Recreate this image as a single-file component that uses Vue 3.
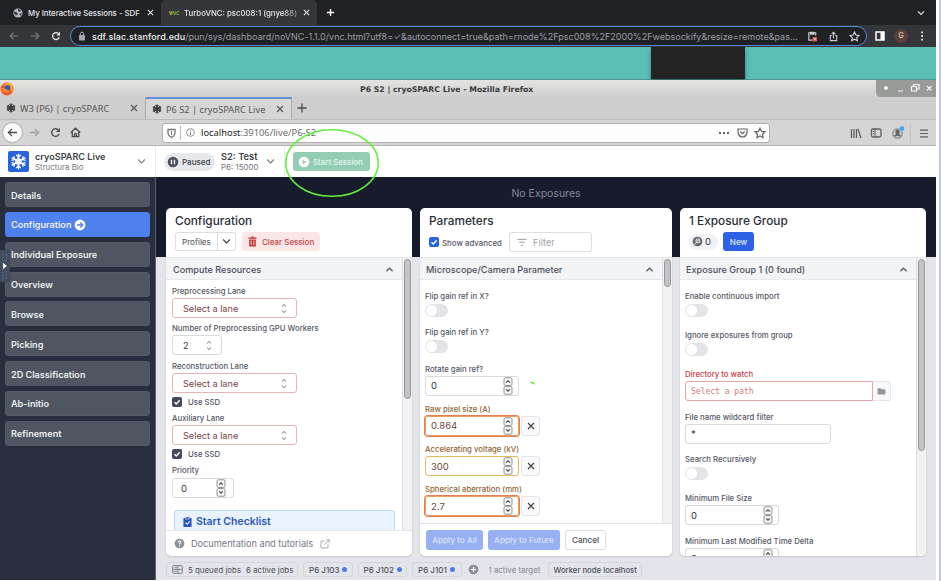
<script setup>
const nav = ['Details', 'Configuration', 'Individual Exposure', 'Overview', 'Browse', 'Picking', '2D Classification', 'Ab-initio', 'Refinement']
const jobs = ['P6 J103', 'P6 J102', 'P6 J101']
const micro = [
  { label: 'Rotate gain ref?', value: '0', kind: 'plain' },
  { label: 'Raw pixel size (A)', value: '0.864', kind: 'hot' },
  { label: 'Accelerating voltage (kV)', value: '300', kind: 'warn' },
  { label: 'Spherical aberration (mm)', value: '2.7', kind: 'hot' },
]
</script>

<template>
  <div class="screen">
    <svg class="defs" width="0" height="0">
      <symbol id="spin" viewBox="0 0 10 19">
        <rect x=".8" y=".8" width="8.4" height="8.2" rx="1.5" fill="#f7f7f7" stroke="#8c8c8c" />
        <rect x=".8" y="10" width="8.4" height="8.2" rx="1.5" fill="#f7f7f7" stroke="#8c8c8c" />
        <path d="M3 6l2-2 2 2M3 13l2 2 2-2" fill="none" stroke="#444" stroke-width="1.1" />
      </symbol>
      <symbol id="updown" viewBox="0 0 6 12">
        <path d="M.8 3.8L3 1.5l2.2 2.3M.8 8.2L3 10.5l2.2-2.3" fill="none" stroke="#8d8f96" stroke-width="1.1" />
      </symbol>
      <symbol id="down" viewBox="0 0 8 6"><path d="M1 1.3l3 3 3-3" fill="none" stroke="currentColor" stroke-width="1.2" /></symbol>
      <symbol id="up" viewBox="0 0 8 6"><path d="M1.2 4.6L4 1.8l2.8 2.8" fill="none" stroke="#5c6270" stroke-width="1.2" /></symbol>
      <symbol id="x" viewBox="0 0 8 8"><path d="M1 1l6 6M7 1L1 7" fill="none" stroke="currentColor" stroke-width="1.2" /></symbol>
      <symbol id="flake" viewBox="0 0 20 20">
        <g fill="none" stroke="currentColor">
          <path d="M10 .8v18.400M2 5.400l16 9.200M2 14.600l16-9.200" />
          <path d="M7.300 2.300l2.700 2.700 2.700-2.700M7.300 17.700l2.700-2.700 2.700 2.700M1.800 8.700l3.700-1-1-3.700M18.200 11.300l-3.700 1 1 3.700M1.800 11.300l3.700 1-1 3.700M18.200 8.700l-3.700-1 1-3.700M10 6.500l3 1.800v3.500l-3 1.800-3-1.800V8.300z" />
        </g>
      </symbol>
      <symbol id="check" viewBox="0 0 10 10"><path d="M2.5 5.2l1.8 1.8 3.4-3.8" fill="none" stroke="#fff" stroke-width="1.4" /></symbol>
      <symbol id="back" viewBox="0 0 12 10"><path d="M11 5H1.5M5.5 1l-4 4 4 4" fill="none" stroke="currentColor" stroke-width="1.4" /></symbol>
      <symbol id="reload" viewBox="0 0 12 12"><path d="M10 7.5A4.2 4.2 0 1 1 9.5 3.6" fill="none" stroke="currentColor" stroke-width="1.5" /><path d="M10.8 1v4.4H6.4z" fill="currentColor" /></symbol>
      <symbol id="star" viewBox="0 0 12 12"><path d="M6 1.2l1.5 3.2 3.4.4-2.5 2.4.7 3.5L6 9l-3.1 1.7.7-3.5L1.100 4.800l3.400-.4z" fill="none" stroke="currentColor" stroke-width="1.200" /></symbol>
    </svg>

    <header class="c-tabs">
      <div class="c-tab first">
        <svg class="globe" viewBox="0 0 10 10"><circle cx="5" cy="5" r="4.600" fill="#b5b8bc" /><path d="M1 3.500l3 1 1 2-2 1-2-2zM5 1l3 1-1 2-2-1zM6 6l3-1-1 3z" fill="#3b3d41" /></svg>
        <span class="t1">My Interactive Sessions - SDF</span><svg class="x"><use href="#x" /></svg>
      </div>
      <div class="c-tab active">
        <span class="vnc">V<i>NC</i></span><span class="t2">TurboVNC: psc008:1 (gnye88)</span><svg class="x"><use href="#x" /></svg>
      </div>
      <svg class="plus" viewBox="0 0 10 10"><path d="M5 1v8M1 5h8" stroke="#fff" stroke-width="1.500" /></svg>
      <svg class="more"><use href="#down" /></svg>
    </header>

    <div class="c-bar">
      <svg class="ic dim"><use href="#back" /></svg>
      <svg class="ic dim flip"><use href="#back" /></svg>
      <svg class="ic"><use href="#reload" /></svg>
      <div class="c-url">
        <svg class="lock" viewBox="0 0 8 10"><rect x="1" y="4" width="6" height="5.500" rx=".8" fill="#a4a7ab" /><path d="M2.300 4V2.800a1.700 1.700 0 0 1 3.400 0V4" fill="none" stroke="#a4a7ab" /></svg>
        <span class="addr"><b>sdf.slac.stanford.edu</b>/pun/sys/dashboard/noVNC-1.1.0/vnc.html?utf8=✓&amp;autoconnect=true&amp;path=rnode%2Fpsc008%2F2000%2Fwebsockify&amp;resize=remote&amp;pas...</span>
        <svg class="clip" viewBox="0 0 12 12"><path d="M9.500 5V2H2v8h4M4 1.500h3.500v2H4z" fill="none" stroke="#c9cbcf" stroke-width="1.300" /><rect x="6" y="6.500" width="5" height="5" rx="1" fill="#e2574c" /><path d="M7.500 8l2 2M9.500 8l-2 2" stroke="#fff" stroke-width=".7" /></svg>
        <svg class="share" viewBox="0 0 12 12"><path d="M4 5H2.500v5.500h7V5H8M6 8V1.500M4 3.500l2-2 2 2" fill="none" stroke="#c9cbcf" stroke-width="1.200" /></svg>
        <svg class="star"><use href="#star" /></svg>
      </div>
      <svg class="panel" viewBox="0 0 10 10"><path d="M1 1h8v8H1z" fill="none" stroke="#fff" stroke-width="1.500" /><path d="M5.500 1H9v8H5.500z" fill="#fff" /></svg>
      <span class="ava">G</span>
      <svg class="dots" viewBox="0 0 4 10"><path d="M1.200.5h1.800v1.800H1.200zM1.200 4.100h1.800v1.800H1.200zM1.200 7.700h1.800v1.800H1.200z" fill="#dfe1e5" /></svg>
    </div>

    <div class="desk"><div class="shade"></div></div>

    <div class="f-title">
      <svg class="fox" viewBox="0 0 14 14"><circle cx="7" cy="7" r="6.500" fill="#f5572c" /><path d="M2 2l2 1.200Q8-1 11 2q3 4 1 8-3-7-8-6z" fill="#ffae24" /><circle cx="7.500" cy="6" r="3" fill="#3a5bb0" /><path d="M1 6q5 0 6 2 3 1 3-1 0 4-4 4-4-1-5-5z" fill="#fb8a25" /></svg>
      <b>P6 S2 | cryoSPARC Live - Mozilla Firefox</b>
      <svg class="wm" viewBox="0 0 60 17"><path d="M0 0h60v17H5q-5 0-5-5z" fill="#999b99" /><g fill="none" stroke="#f5f5f5" stroke-width="1.200"><path d="M10 6v4M8 8h4" stroke-width="2" /><path d="M22 11h5M35.500 6.500h5v4.500h-5zM37.500 6V4.500H43V9h-2M51 6l4.500 4.500M55.500 6L51 10.500" /></g></svg>
    </div>
    <div class="f-tabs">
      <div class="f-tab a"><svg class="fl"><use href="#flake" /></svg><span class="ft1">W3 (P6) | cryoSPARC</span><svg class="x"><use href="#x" /></svg></div>
      <div class="f-tab b"><svg class="fl"><use href="#flake" /></svg><span class="ft2">P6 S2 | cryoSPARC Live</span><svg class="x"><use href="#x" /></svg></div>
      <svg class="fplus" viewBox="0 0 10 10"><path d="M5 .5v9M.5 5h9" stroke="#4a4a4a" stroke-width="1.300" /></svg>
    </div>
    <div class="f-nav">
      <span class="round"><svg class="ic"><use href="#back" /></svg></span>
      <svg class="ic fwd flip"><use href="#back" /></svg>
      <svg class="ic rl"><use href="#reload" /></svg>
      <svg class="ic hm" viewBox="0 0 12 12"><path d="M.8 6.300L6 1.300l5.200 5M2.500 5.500v5h7v-5M5 10.500v-3h2v3" fill="none" stroke="#4c4c4c" stroke-width="1.400" /></svg>
      <div class="f-url">
        <svg class="shield" viewBox="0 0 9 10"><path d="M1 1.500h7v3Q8 8 4.500 9.300 1 8 1 4.500z" fill="none" stroke="#777" stroke-width="1.300" /><path d="M4.500 3v4" stroke="#777" /></svg>
        <i class="vr"></i>
        <svg class="info" viewBox="0 0 10 10"><circle cx="5" cy="5" r="4.300" fill="none" stroke="#888" /><path d="M5 2.300v1.200M5 4.300v3.500" stroke="#777" stroke-width="1.100" /></svg>
        <span class="local"><em>localhost</em>:39106/live/P6-S2</span>
        <svg class="uic" viewBox="0 0 48 12"><g fill="none" stroke="#626262" stroke-width="1.200"><path d="M1 6h2M5 6h2M9 6h2" stroke-width="2" /><path d="M20 2h9v3.500q-1 4.500-4.500 4.500T20 5.500zM22.300 4.500l2.200 2.200 2.200-2.200" /><path d="M42 1.200l1.500 3.200 3.400.4-2.500 2.400.7 3.500L42 9l-3.100 1.700.7-3.500-2.500-2.400 3.400-.4z" /></g></svg>
      </div>
      <svg class="tools" viewBox="0 0 80 26"><g fill="none" stroke="#606060" stroke-width="1.300"><path d="M1.500 9v9M4 9v9M6.500 9v9M8 9l3 9" /><rect x="21.500" y="9" width="9.500" height="8" rx="1.500" /><path d="M25 9v8M23 11.500h1M23 13.500h1" stroke-width="1" /><circle cx="47.500" cy="13.500" r="4.700" fill="#cdd0d3" stroke="#8a8d90" /><circle cx="47.500" cy="12" r="1.600" fill="#666" /><path d="M44.800 16q2.700-2.500 5.400 0" stroke-width="2" /><path d="M70 10.200h8M70 13.500h8M70 16.800h8" stroke-width="1.200" /></g><circle cx="52" cy="8.500" r="2.300" fill="#3ea6ec" /><path d="M60.500 2v21" stroke="#c6c6c6" /></svg>
    </div>

    <div class="head">
      <div class="brand">
        <span class="logo"><svg><use href="#flake" /></svg></span>
        <div class="two"><b>cryoSPARC Live</b><small>Structura Bio</small></div>
        <svg class="chev"><use href="#down" /></svg>
      </div>
      <div class="sess">
        <span class="paused"><svg viewBox="0 0 12 12"><circle cx="6" cy="6" r="5.300" fill="#4b505c" /><path d="M4.500 3.700v4.600M7.500 3.700v4.600" stroke="#fff" stroke-width="1.300" /></svg>Paused</span>
        <div class="two s2"><b>S2: Test</b><small>P6: 15000</small></div>
        <svg class="chev"><use href="#down" /></svg>
      </div>
      <div class="startw"><button class="start"><svg viewBox="0 0 12 12"><circle cx="6" cy="6" r="5.300" fill="#fff" /><path d="M4.700 3.700v4.600L8.300 6z" fill="#8fcdb1" /></svg>Start Session</button></div>
    </div>

    <div class="body">
      <nav class="side">
        <a v-for="(n, i) in nav" :key="n" :class="{ on: i === 1 }">{{ n }}<svg v-if="i === 1" viewBox="0 0 12 12"><circle cx="6" cy="6" r="5.400" fill="#fff" /><path d="M3 6h5.500M6.300 3.500L8.800 6 6.300 8.500" fill="none" stroke="#4f80f0" stroke-width="1.300" /></svg></a>
      </nav>
      <main class="main">
        <div class="noexp">No Exposures</div>
        <div class="cards">
          <section class="card c1">
            <div class="ch">
              <h2>Configuration</h2>
              <div class="row">
                <span class="split"><span>Profiles</span><svg><use href="#down" /></svg></span>
                <button class="clear"><svg viewBox="0 0 10 12"><path d="M.5 1.500h3L4 .5h2l.5 1h3v1.500h-9zM1.300 3.700h7.400v7.800H1.300z" fill="#c93334" /><path d="M3.500 5v5M6.500 5v5" stroke="#f6dede" /></svg>Clear Session</button>
              </div>
            </div>
            <div class="scroll">
              <div class="pane">
                <div class="sec">Compute Resources<svg><use href="#up" /></svg></div>
                <div class="form">
                  <label>Preprocessing Lane</label>
                  <div class="sel red">Select a lane<svg><use href="#updown" /></svg></div>
                  <label class="l3">Number of Preprocessing GPU Workers</label>
                  <div class="sel num">2<svg><use href="#updown" /></svg></div>
                  <label class="l2">Reconstruction Lane</label>
                  <div class="sel red">Select a lane<svg><use href="#updown" /></svg></div>
                  <div class="ssd"><i><svg><use href="#check" /></svg></i>Use SSD</div>
                  <label class="l3">Auxiliary Lane</label>
                  <div class="sel red">Select a lane<svg><use href="#updown" /></svg></div>
                  <div class="ssd"><i><svg><use href="#check" /></svg></i>Use SSD</div>
                  <label class="l3">Priority</label>
                  <div class="inp prio">0<svg><use href="#spin" /></svg></div>
                  <div class="checklist"><svg viewBox="0 0 10 12"><path d="M.5 1.500h9v10h-9z" fill="#2453bd" /><path d="M3 .3h4v2.500H3z" fill="#2453bd" stroke="#e9f3fe" stroke-width=".7" /><path d="M2.800 6.800l1.800 1.800 3-3.300" fill="none" stroke="#fff" stroke-width="1.200" /></svg>Start Checklist</div>
                </div>
              </div>
              <div class="track"><i></i></div>
            </div>
            <div class="foot docs">
              <svg class="q" viewBox="0 0 12 12"><circle cx="6" cy="6" r="5.300" fill="#8b9099" /><path d="M4.400 4.900Q4.500 3.300 6 3.300t1.600 1.400Q7.600 5.600 6 6.200v.8M6 8v1.200" fill="none" stroke="#fff" stroke-width="1.200" /></svg>
              <span>Documentation and tutorials</span>
              <svg class="ext" viewBox="0 0 10 10"><path d="M4.500 2H1v7h7V5.500M6 .8h3.200V4M9 1L4.300 5.700" fill="none" stroke="#a9adb5" /></svg>
            </div>
          </section>

          <section class="card c2">
            <div class="ch">
              <h2>Parameters</h2>
              <div class="row adv">
                <i class="cb"><svg><use href="#check" /></svg></i><span class="sa">Show advanced</span>
                <span class="filter"><svg viewBox="0 0 12 10"><path d="M1 1.500h10M3 4.700h6M4.700 8h2.600" stroke="#8b8f98" /></svg>Filter</span>
              </div>
            </div>
            <div class="scroll">
              <div class="pane">
                <div class="sec">Microscope/Camera Parameter<svg><use href="#up" /></svg></div>
                <div class="form g">
                  <label>Flip gain ref in X?</label><i class="tog"></i>
                  <label>Flip gain ref in Y?</label><i class="tog"></i>
                  <div v-for="m in micro" :key="m.label" class="field" :class="m.kind">
                    <label>{{ m.label }}</label>
                    <div class="fr"><div class="inp">{{ m.value }}<svg><use href="#spin" /></svg></div><button v-if="m.kind !== 'plain'" class="xb"><svg><use href="#x" /></svg></button></div>
                  </div>
                </div>
              </div>
              <div class="track"><i></i></div>
            </div>
            <div class="foot act"><button class="p a1">Apply to All</button><button class="p a2">Apply to Future</button><button class="a3">Cancel</button></div>
            <svg class="speck" viewBox="0 0 5 4"><path d="M.5 1l1.500.8 1 .2 1.500 1.200" fill="none" stroke="#55ea38" stroke-width="1.400" /></svg>
          </section>

          <section class="card c3">
            <div class="ch">
              <h2>1 Exposure Group</h2>
              <div class="row">
                <span class="cnt"><svg viewBox="0 0 12 12"><circle cx="6" cy="6" r="5.300" fill="#666a73" /><circle cx="6.500" cy="5.300" r="2.200" fill="none" stroke="#fff" /><path d="M5 7L2.500 9.300M5.500 5.300h2" stroke="#fff" /></svg>0</span>
                <button class="new">New</button>
              </div>
            </div>
            <div class="scroll">
              <div class="pane">
                <div class="sec">Exposure Group 1 (0 found)<svg><use href="#up" /></svg></div>
                <div class="form e">
                  <label>Enable continuous import</label><i class="tog"></i>
                  <label class="e2">Ignore exposures from group</label><i class="tog"></i>
                  <label class="e3 bad">Directory to watch</label>
                  <div class="path"><span>Select a path</span><b><svg viewBox="0 0 10 8"><path d="M.5 1q0-.7.7-.7h2.600l1.200 1.200h3.800q.7 0 .7.700v4.600q0 .7-.7.7H1.200q-.7 0-.7-.7z" fill="#90949b" /></svg></b></div>
                  <label class="e4">File name wildcard filter</label>
                  <div class="inp wild"><span>*</span></div>
                  <label class="e4">Search Recursively</label><i class="tog"></i>
                  <label class="e2">Minimum File Size</label>
                  <div class="inp">0<svg><use href="#spin" /></svg></div>
                  <label class="e4">Minimum Last Modified Time Delta</label>
                  <div class="inp">0<svg><use href="#spin" /></svg></div>
                </div>
              </div>
              <div class="track"><i></i></div>
            </div>
          </section>
        </div>
        <footer class="status">
          <span class="q1"><svg viewBox="0 0 12 10"><rect x=".7" y=".7" width="10.600" height="8.600" rx="1" fill="none" stroke="#777c86" stroke-width="1.100" /><path d="M1 5h10M6.500 1v8M2.500 3h3M2.500 7h3" stroke="#777c86" /></svg><span>5 queued jobs</span><span class="aj">6 active jobs</span></span>
          <span v-for="j in jobs" :key="j" class="job">{{ j }}<i></i></span>
          <svg class="add" viewBox="0 0 12 12"><circle cx="6" cy="6" r="5.300" fill="#8b9099" /><path d="M6 3.300v5.400M3.300 6h5.400" stroke="#fff" stroke-width="1.300" /></svg>
          <span class="tgt">1 active target</span>
          <span class="wk">Worker node localhost</span>
        </footer>
      </main>
    </div>
    <div class="handle"><svg viewBox="0 0 10 33"><path d="M3 4.500v10M6.500 4.500v8M3 20v10M6.500 22v8" stroke="#8090a5" stroke-width="1" stroke-dasharray="1 2" /><path d="M3 13.500l4 3-4 3z" fill="#fff" /></svg></div>
    <svg class="ring" viewBox="0 0 96 70"><ellipse cx="48" cy="35" rx="46.300" ry="33.300" fill="none" stroke="#62f23e" stroke-width="1.500" /></svg>
  </div>
</template>

<style>
html, body { margin: 0; background: #fff; overflow: hidden; }
</style>

<style scoped>
* { box-sizing: border-box; }
svg { display: block; flex: none; }
button { font: inherit; margin: 0; padding: 0; border: 0; }
i, em { font-style: normal; }
.defs { position: absolute; }
.screen { position: relative; width: 941px; height: 581px; overflow: hidden; padding-right: 3px; border-right: 2px solid #bccbf2; font-family: Inter, sans-serif; white-space: nowrap; display: flex; flex-direction: column; }
.flip { transform: scaleX(-1); }

.c-tabs { height: 25px; background: #202124; display: flex; align-items: center; color: #e6e7ea; font: 500 7.800px Inter, sans-serif; flex: none; }
.c-tab { height: 25px; display: flex; align-items: center; }
.first { width: 161px; padding-left: 13px; }
.globe { width: 10px; height: 10px; margin-right: 5px; }
.t1, .t2 { width: 119px; }
.t2 { -webkit-mask-image: linear-gradient(90deg, #000 83%, #0007 93%); mask-image: linear-gradient(90deg, #000 83%, #0007 93%); }
.c-tab .x { width: 7px; height: 7px; }
.active { width: 156px; background: #35363a; border-radius: 5px 5px 0 0; padding-left: 8px; }
.vnc { width: 15px; font: 700 5px "Liberation Sans", sans-serif; color: #e5da2a; }
.vnc i { color: #65b632; }
.plus { width: 9px; height: 9px; margin-left: 9px; }
.more { width: 8px; height: 6px; margin-left: auto; margin-right: 11px; }
.c-bar { height: 22px; background: #35363a; flex: none; display: flex; align-items: center; padding-left: 9px; color: #eee; }
.c-bar .ic { width: 10px; height: 10px; margin-right: 11px; }
.c-bar .dim { color: #7d7f83; }
.c-url { width: 797px; height: 20px; margin-left: -2px; border: 1.500px solid #5a87d8; border-radius: 10px; background: #202124; display: flex; align-items: center; padding-left: 7px; flex: none; }
.lock { width: 8px; height: 10px; margin-right: 6px; }
.addr { width: 715px; flex: none; color: #9b9ea3; font-size: 9px; letter-spacing: .01px; }
.addr b { color: #eff0f2; font-weight: 500; letter-spacing: .1px; }
.clip, .share, .star { width: 11px; height: 11px; margin-right: 10px; }
.star { margin: 0; color: #d5d7da; }
.panel { width: 10px; height: 10px; margin-left: 8px; }
.ava { width: 14px; height: 14px; border-radius: 50%; background: #5c3f36; color: #eee; font-size: 7px; line-height: 14px; text-align: center; margin-left: 9px; }
.dots { width: 4px; height: 10px; margin-left: 12px; }
.desk { height: 33px; flex: none; background: #5bbfb6; border-bottom: 1px solid #4e9992; }
.shade { width: 94px; height: 32px; margin-left: 651px; background: #232323; box-shadow: 0 3px 5px #0005; }

.f-title { height: 17px; background: linear-gradient(#e4e4e2, #cfcfcf); flex: none; display: flex; align-items: center; font: 700 7.750px "DejaVu Sans", sans-serif; color: #3c3c3c; }
.fox { width: 14px; height: 14px; margin-bottom: 0; }
.f-title b { margin: 2px 0 0 346px; width: 200px; }
.wm { width: 60px; height: 17px; margin-left: auto; }
.f-tabs { height: 23px; background: #cecece; border-bottom: 1px solid #bbb; display: flex; align-items: center; font: 9.200px "Noto Sans", sans-serif; color: #555; flex: none; }
.f-tab { height: 22px; display: flex; align-items: center; padding-left: 6px; }
.f-tab .x { width: 8px; height: 8px; color: #555; }
.fl { width: 10px; height: 10px; color: #3d3d3d; stroke-width: 2.500; }
.a { width: 146px; border-right: 1px solid #aaa; }
.b { width: 146px; background: #d6d6d6; border-top: 2px solid #6690ce; border-right: 1px solid #aaa; }
.ft1 { width: 110px; margin-left: 4px; letter-spacing: .05px; }
.ft2 { width: 110px; margin-left: 4px; letter-spacing: .03px; }
.fplus { width: 10px; height: 10px; margin-left: 5px; }
.f-nav { height: 26px; flex: none; background: #d5d5d5; border-bottom: 1px solid #b2b2b2; display: flex; align-items: center; color: #4c4c4c; }
.f-nav .ic { width: 11px; height: 11px; }
.round { width: 21px; height: 21px; margin-left: 2px; background: #fafafa; border: 1px solid #aaa; border-radius: 50%; display: grid; place-items: center; }
.fwd { color: #a0a0a0; margin-left: 6px; }
.rl { margin-left: 10px; }
.hm { margin-left: 9px; }
.f-url { width: 608px; height: 20px; margin-left: 81px; background: #fdfdfd; border: 1px solid #b0b0b0; border-radius: 3px; display: flex; align-items: center; padding-left: 4px; }
.shield { width: 9px; height: 10px; }
.vr { height: 14px; border-left: 1px solid #bbb; margin: 0 5px 0 4px; }
.info { width: 9px; height: 9px; }
.local { margin-left: 6px; font: 9.350px "Noto Sans", sans-serif; color: #6c6c6c; }
.local em { color: #222; }
.uic { width: 48px; height: 12px; margin-left: auto; margin-right: 3px; }
.tools { width: 80px; height: 26px; margin-left: 80px; }

.head { height: 31px; flex: none; background: #fff; display: flex; }
.brand { width: 156px; display: flex; align-items: center; padding-left: 8px; border-right: 1px solid #ececee; color: #858993; }
.logo { width: 21px; height: 21px; background: #2763dc; border-radius: 2px; color: #fff; padding: 2px; stroke-width: 1.600; }
.logo svg { width: 17px; height: 17px; }
.logo svg, .fl { overflow: visible; }
.two { margin-left: 6px; display: flex; flex-direction: column; width: 102px; }
.two b { font-size: 9.100px; line-height: 11px; font-weight: 600; color: #3c3f49; }
.two small { font-size: 7.900px; line-height: 10px; color: #74777f; }
.chev { width: 9px; height: 7px; }
.sess { width: 129px; display: flex; align-items: center; padding-left: 8px; color: #858993; border-right: 1px solid #ececee; }
.paused { width: 51px; height: 18px; border-radius: 9px; background: #e7e8ec; color: #3c3f49; font-size: 8px; font-weight: 500; display: flex; align-items: center; gap: 3px; padding-left: 3px; }
.paused svg, .start svg { width: 12px; height: 12px; }
.s2 { width: 45px; }
.s2 b { font-size: 9.300px; }
.startw { padding: 6px 8px; }
.start { width: 77px; height: 19px; background: #93ceb4; border-radius: 3px; color: #e6f7ee; font-size: 7.850px; font-weight: 500; display: flex; align-items: center; gap: 3px; padding-left: 5px; }
.body { flex: none; height: 403px; display: flex; }
.side { width: 156px; background: #282e3e; border-right: 1px solid #5b606c; padding: 5px; display: flex; flex-direction: column; gap: 4.850px; }
.side a { height: 25px; flex: none; border-radius: 3px; background: #4f5561; color: #eceef0; font-size: 9.100px; font-weight: 600; display: flex; align-items: center; padding: 1px 0 0 5px; border: 1px solid #555b66; }
.side a.on { background: #4e80ee; border-color: #4e80ee; }
.side svg { width: 12px; height: 12px; margin-left: 3px; }
.main { width: 780px; background: linear-gradient(#171c2c 80px, #e4e5ea 80px); display: flex; flex-direction: column; }
.noexp { height: 31px; line-height: 33px; text-align: center; font-size: 10.500px; color: #858995; flex: none; }
.cards { height: 348px; display: flex; gap: 8px; padding-left: 10px; flex: none; }
.card { width: 246px; background: #fff; border-radius: 5px; overflow: hidden; display: flex; flex-direction: column; box-shadow: 0 1px 2px #0002; position: relative; }
.c2 { width: 252px; }
.ch { height: 49px; flex: none; padding-left: 9px; }
h2 { margin: 0; font-size: 11.800px; font-weight: 500; line-height: 15px; padding: 6px 0 3px; color: #2b2e38; }
.row { display: flex; align-items: center; height: 19px; }
.split { display: flex; align-items: center; width: 61px; height: 19px; border: 1px solid #dddee3; border-radius: 3px; font-size: 8.100px; color: #4b4e58; }
.split span { width: 42px; line-height: 18px; height: 17px; padding-left: 6px; border-right: 1px solid #dddee3; }
.split svg { width: 9px; height: 7px; margin-left: 4px; }
.clear { width: 78px; height: 19px; margin-left: 6px; background: #fae6e7; color: #c84547; border-radius: 3px; font-size: 7.950px; font-weight: 500; display: flex; align-items: center; gap: 5px; padding-left: 6px; }
.clear svg { width: 9px; height: 11px; }
.scroll { flex: 1; min-height: 0; display: flex; }
.pane { flex: 1; overflow: hidden; border-top: 1px solid #e4e6ea; }
.track { width: 10px; background: #f2f2f3; border-left: 1px solid #dfdfe2; border-top: 1px solid #e4e6ea; padding: 1px 1px; }
.track i { display: block; width: 7px; height: 140px; border-radius: 4px; background: #c3c3c5; border: 1px solid #949496; }
.c2 .track i { height: 28px; }
.c3 .track i { height: 192px; }
.sec { height: 22px; background: #f3f4f6; border-bottom: 1px solid #e7e8ec; padding: 1px 7px 0; display: flex; align-items: center; justify-content: space-between; font-size: 9.150px; font-weight: 500; color: #4b4f5b; }
.c2 .sec, .c3 .sec { padding-left: 6px; }
.sec svg { width: 9px; height: 7px; margin-right: 1px; }
.form { padding: 5px 6px 0; display: flex; flex-direction: column; }
label { display: block; height: 12px; line-height: 12px; margin-bottom: 1px; font-size: 7.750px; font-weight: 500; color: #545864; flex: none; }
.l2 { margin-top: 5px; }
.l3 { margin-top: 4px; }
.sel { width: 125px; height: 20px; border: 1px solid #d9dadf; border-radius: 3px; font-size: 9.150px; padding: 0 9px 0 10px; display: flex; align-items: center; justify-content: space-between; color: #34363e; flex: none; }
.red { border-color: #e5b5b5; color: #794044; }
.num { width: 50px; }
.sel svg { width: 6px; height: 11px; }
.ssd { height: 12px; margin-top: 3px; display: flex; align-items: center; font-size: 7.750px; font-weight: 500; color: #545864; gap: 5px; flex: none; }
.ssd i { width: 10px; height: 10px; border-radius: 2px; background: #454859; margin-right: 1px; }
.ssd svg, .cb svg { width: 10px; height: 10px; }
.inp { width: 94px; height: 20px; border: 1px solid #d9dadf; border-radius: 3px; font-size: 9.500px; padding: 0 5px; color: #34363e; display: flex; align-items: center; justify-content: space-between; flex: none; }
.inp svg { width: 10px; height: 18px; }
.prio { width: 62px; padding: 0 7px 0 8px; margin-top: 1px; }
.checklist { margin: 12px 1px 0 2px; height: 30px; border: 1px solid #b9d7f8; border-radius: 3px; background: #e9f3fe; color: #2d58b8; font-size: 10.500px; font-weight: 600; display: flex; gap: 4px; padding: 4px 8px; line-height: 14px; }
.checklist svg { width: 9px; height: 12px; margin-top: 1px; }
.foot { flex: none; border-top: 1px solid #e3e4e8; display: flex; align-items: center; }
.docs { height: 26px; padding-left: 8px; color: #757983; font-size: 9.180px; }
.q { width: 11px; height: 11px; margin-right: 6px; }
.ext { width: 10px; height: 10px; margin-left: 7px; }
.adv { height: 20px; }
.cb { width: 10px; height: 10px; border-radius: 2px; background: #2b62e0; }
.sa { font-size: 7.850px; font-weight: 500; color: #545864; margin-left: 3px; width: 67px; padding-top: 1px; }
.filter { width: 83px; height: 20px; border: 1px solid #dddee3; border-radius: 3px; color: #a2a4aa; font-size: 9.200px; display: flex; align-items: center; gap: 5px; padding-left: 6px; }
.filter svg { width: 12px; height: 9px; }
.g, .e { padding: 10px 5px 0; }
.tog { width: 23px; height: 13px; border-radius: 7px; background: #e3e4e8; margin: 1px 0 9.300px; padding: 1px; flex: none; }
.tog::before { content: ""; display: block; width: 11px; height: 11px; border-radius: 50%; background: #fff; }
.e .tog { margin-bottom: 9px; }
.field { height: 40.250px; flex: none; }
.hot label, .warn label { color: #936431; }
.fr { display: flex; gap: 3px; }
.hot .inp, .warn .inp { border-color: #dfba5e; color: #69483b; }
.hot .inp { border: 1px solid #e8a05f; box-shadow: 0 0 0 1px #e87c54; }
.xb { width: 19px; height: 20px; border: 1px solid #e3e5e9; background: #f8f9fa; border-radius: 3px; display: grid; place-items: center; color: #444; margin-left: -1px; }
.xb svg { width: 8px; height: 8px; }
.act { height: 33px; padding-left: 6px; gap: 5px; font-size: 8.200px; font-weight: 500; }
.act button { height: 20px; border-radius: 3px; }
.p { background: #97aff3; color: #d9e2fd; }
.a1 { width: 57px; }
.a2 { width: 72px; }
.act .a3 { width: 41px; background: #fff; border: 1px solid #dddee3; color: #4b4e58; }
.speck { position: absolute; left: 110px; top: 173px; width: 5px; height: 4px; }
.cnt { width: 29px; height: 16px; border-radius: 8px; background: #f1f2f4; display: flex; align-items: center; gap: 2px; padding-left: 3px; font-size: 9.500px; color: #34363e; }
.cnt svg { width: 11px; height: 11px; }
.new { width: 31px; height: 19px; margin-left: 5px; border-radius: 3px; background: #2e61e6; color: #dce6ff; font-size: 8.100px; font-weight: 500; }
.e2 { margin-top: 3px; }
.e3 { margin-top: 3px; }
.e4 { margin-top: 9.700px; }
.bad { color: #c93a3d; }
.path { height: 20px; width: 206px; display: flex; flex: none; font: 8px "DejaVu Sans Mono", monospace; color: #d9777a; }
.path span { width: 188px; border: 1px solid #e3a4a5; border-radius: 3px 0 0 3px; padding-left: 5px; line-height: 19px; }
.path b { flex: 1; border: 1px solid #e3e5e9; border-left: 0; background: #f8f9fa; border-radius: 0 3px 3px 0; display: grid; place-items: center; }
.path svg { width: 9px; height: 7px; }
.wild { width: 146px; }
.status { height: 24px; display: flex; align-items: center; padding: 3px 0 0 10px; font-size: 7.900px; color: #4b4e58; }
.q1, .job, .wk { height: 15px; border: 1px solid #d5d7dc; border-radius: 3px; display: flex; align-items: center; flex: none; }
.q1 { width: 132px; padding-left: 5px; margin-right: 5px; }
.q1 svg { width: 11px; height: 9px; margin-right: 5px; }
.aj { margin-left: 5px; }
.job { width: 49.500px; padding-left: 5px; margin-right: 5px; font-weight: 500; gap: 3px; font-size: 8px; }
.job i { width: 5px; height: 5px; border-radius: 50%; background: #4b7cea; }
.add { width: 11px; height: 11px; margin-left: 1px; }
.tgt { margin-left: 10px; width: 59px; color: #84878f; flex: none; }
.wk { width: 94px; padding-left: 5px; font-weight: 500; font-size: 7.750px; }
.handle { position: absolute; left: 0; top: 250px; width: 10px; height: 32px; background: #414b5e; border-radius: 0 4px 4px 0; box-shadow: 0 0 1px #0008; }
.handle svg { width: 10px; height: 32px; }
.ring { position: absolute; left: 284px; top: 128px; width: 96px; height: 70px; }
</style>
